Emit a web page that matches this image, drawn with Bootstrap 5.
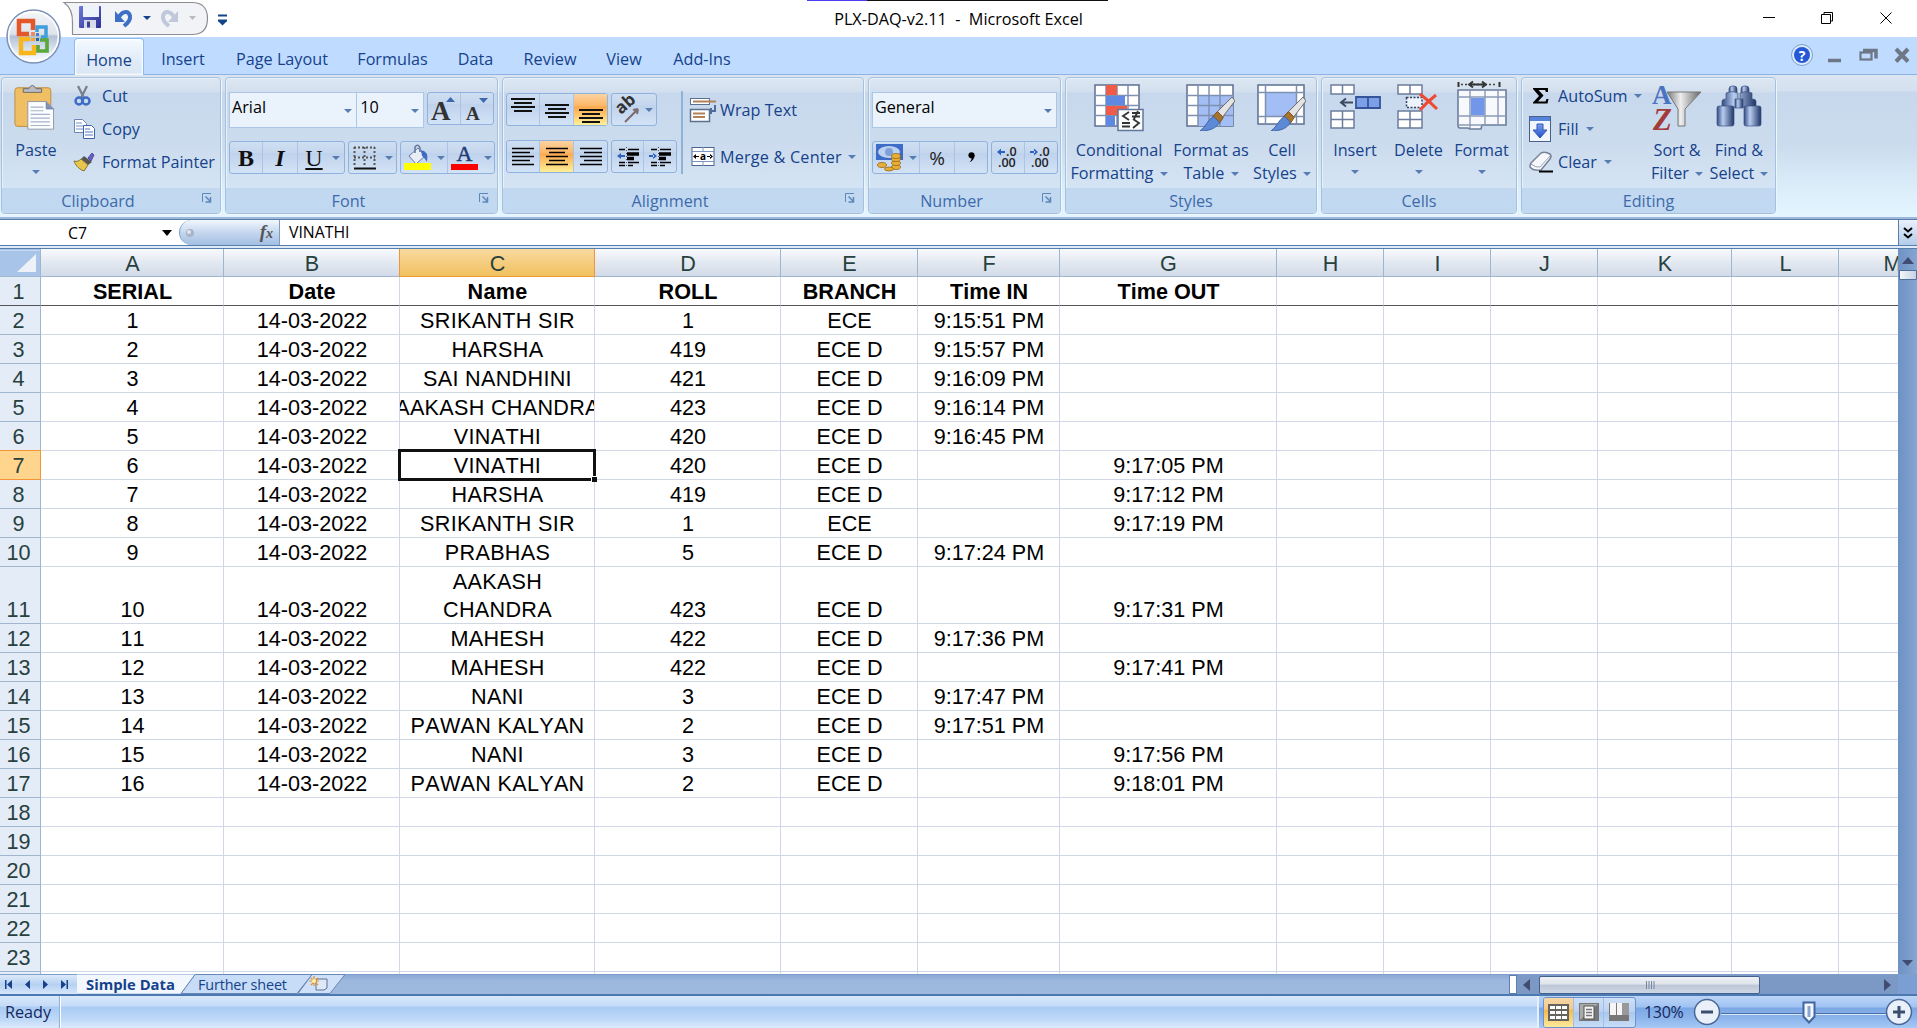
<!DOCTYPE html>
<html lang="en">
<head>
<meta charset="utf-8">
<title>PLX-DAQ-v2.11 - Microsoft Excel</title>
<link href="https://cdn.jsdelivr.net/npm/bootstrap@5.3.0/dist/css/bootstrap.min.css" rel="stylesheet">
<style>
html,body{height:100%;overflow:hidden}
body{font-family:"Open Sans","Noto Sans",sans-serif;font-size:16.2px;line-height:24px;color:#15428b;background:#fff;white-space:nowrap}
svg{display:block;flex:none;overflow:visible}
.app{width:1917px;height:1028px}
/* title bar */
.titlebar{height:37px;color:#000;font-size:16.2px;padding-top:7px}
.notch{width:301px;height:1px;background:linear-gradient(90deg,#4a3cf0 0 60px,#111 60px);left:807px;top:0}
.orb{left:5px;top:8px;z-index:5}
.qat{left:72px;top:1px}
.wbtns{right:0;top:0}
/* tab strip */
.tabstrip{height:38px;background:#bfdbff;border-bottom:1px solid #8db2e3;padding-left:74px;padding-top:1px}
.rtab{height:36px;padding-top:5px}
.rtab.on{height:37px;background:linear-gradient(#f5faff,#e1ebf8 60%,#dbe6f4);border:1px solid #8cbcf2;border-bottom:0;border-radius:4px 4px 0 0;box-shadow:inset 0 0 2px 1px #fff;margin-bottom:-1px}
.t1{width:70px}.t2{width:78px}.t3{width:120px}.t4{width:101px}.t5{width:65px}.t6{width:84px}.t7{width:64px}.t8{width:92px}
/* ribbon */
.ribbon{height:144px;padding:2px 0 2px 1px;background:linear-gradient(#dbe5f2,#d4e0ef 16px,#c7d8ed 17px,#cbdcee 50%,#dcedfa 80%,#e3f5ff 98%);border-bottom:2px solid #9fb8da}
.rgroup{height:137px;border:1px solid #a5c1de;border-radius:4px;box-shadow:1px 1px 0 #edf6fd,inset 1px 1px 0 #e8f1fa;background:linear-gradient(#dde7f3,#d3dfee 14px,#c7d8ed 15px,#ccdcee 50%,#dae9f7);margin-right:4px;overflow:hidden}
.rbody{height:110px}
.rlabel{height:25px;background:linear-gradient(#c2d8f0,#c0d9f1);color:#3e6aaa;padding-top:1px}
.g1{width:220px}.g2{width:273px}.g3{width:362px}.g4{width:193px}.g5{width:252px}.g6{width:196px}.g7{width:255px}
.launch{right:8px;top:5px}
.big{line-height:23px;text-align:center;padding-top:4px}
.dd{width:0;height:0;display:inline-block;border:4px solid transparent;border-top:4px solid #567db1;border-bottom:0;vertical-align:3px}
.combo{height:36px;background:#eaf3fc;border:1px solid #abc6e8;color:#000;padding:3px 0 0 2px;line-height:22px}
.combo .dd{margin:13px 4px 0 0}
.bgrp{height:33px;border:1px solid #8fb2de;border-radius:3px;background:linear-gradient(#cfdff2,#c5d7ee 35%,#bfd2ec 36%,#d3e3f6)}
.bgrp>*{height:100%;display:flex;align-items:center;justify-content:center;border-right:1px solid #a9c4e6}
.bgrp>*:last-child{border-right:0}
.hot{background:linear-gradient(#fbd3a2,#fdb665 38%,#fda94e 42%,#fff096)}
.serifc{font-family:"Liberation Serif",serif;color:#111}
.vsep{width:2px;height:83px;background:#8fb2d8;margin-top:13px}
.w32{width:32px}.w33{width:33px}.w34{width:34px}.w35{width:35px}.w46{width:46px}.w47{width:47px}
.srow{height:33px}
.slist{padding-top:1px}
/* formula bar */
.fbar{height:27px;background:#fff;border-top:1px solid #567fad;border-bottom:1px solid #567fad;color:#000;font-size:15.8px}
.fpill{width:101px;height:25px;border-radius:13px 0 0 13px;border:1px solid #7f9dc4;border-top:0;border-bottom:0;background:linear-gradient(#f2f7fd,#c5d7ef 50%,#a3bfe3)}
.fmore{width:19px;background:linear-gradient(#e9f1fb,#b3cbea);border-left:1px solid #567fad}
.fgap{height:2px;background:#dfebf9}
/* sheet */
.sheetarea{height:726px;border-top:1px solid #567fad}
.pane{width:1898px;height:725px;overflow:hidden}
.sheet{table-layout:fixed;width:1945px;border-collapse:separate;border-spacing:0;font-family:"Liberation Sans",Arial,sans-serif;font-size:21.6px;font-kerning:none;line-height:28px;color:#000}
.sheet th,.sheet td{padding:0;height:29px;text-align:center;vertical-align:bottom;border-right:1px solid #d0d7e5;border-bottom:1px solid #d0d7e5;font-weight:400;position:relative}
.sheet thead th{height:28px;line-height:27px;border-color:#9eb6ce;background:linear-gradient(#f8fafc,#e3e9f1 50%,#d2dbe8);color:#27413e}
.sheet .rh{background:#e4ecf7;border-color:#9eb6ce;color:#27413e;padding-right:4px}
.sheet thead .pickc{background:linear-gradient(#f8d99f,#f1c15f);border-color:#f29536;box-shadow:-1px 0 0 #f29536}
.sheet .pickr{background:#ffd58d;border-color:#f29536;box-shadow:0 -1px 0 #f29536}
.sheet thead .corner{background:#a9c4e9}
.sheet .frz td,.sheet .frz th{border-bottom-color:#555;font-weight:700}
.sheet .frz .rh{font-weight:400}
.sheet td:nth-child(4){letter-spacing:.3px}
.cellin{overflow:hidden;display:flex;justify-content:center}
.celltx{display:block;transform:translate(.5px,1px)}
.cursorbox{left:-2px;top:-2px;right:-2px;bottom:-2px;border:3px solid #111;z-index:2}
.cursorbox::after{content:"";position:absolute;right:-4px;bottom:-4px;width:6px;height:6px;background:#111;border-left:1px solid #fff;border-top:1px solid #fff}
.vbar{width:19px;background:linear-gradient(90deg,#6d92c4,#7c9dcb 60%,#86a6d4)}
.vthumb{width:18px;height:10px;background:linear-gradient(90deg,#f4f6f9,#c6d3e6);border:1px solid #506f9d;border-radius:1px;margin-top:1px}
/* sheet tabs */
.tabsbar{height:22px;background:linear-gradient(#8aa9d6,#9db8de 30%,#9fb9dd);border-top:1px solid #7e9fcb;border-bottom:2px solid #4c79b2}
.navb{width:77px;height:19px;background:linear-gradient(#dce9fa,#b7d1f2 50%,#d5e6fa)}
.stabs{font-size:14.4px;height:19px;line-height:19px}
.tabsvg{left:0;top:0}
.tname1{padding-left:9px;width:121px;font-size:14.8px}
.hthumb{width:221px;height:18px;border:1px solid #44618d;border-radius:2px;background:linear-gradient(#eef1f5,#dfe4eb 45%,#bcc6d6 50%,#cfd8e5)}
.hbar{width:381px;height:19px;background:#7b99c4}
.corner2{width:19px;background:#7b9fd3}
.split{width:8px;height:19px;background:#fff;border:1px solid #5c7eae}
/* status */
.status{height:32px;background:linear-gradient(#d9e8fb,#c5dbf7 30%,#a9cbf4 36%,#c0d9f8 75%,#dcebfd);color:#15295e}
.sleft{width:60px;border-right:1px solid #8eb0da;box-shadow:1px 0 0 #fff}
.sright{width:380px;border-left:2px solid #e7f1fd;background:linear-gradient(#bcd5f8,#a0c3f2 34%,#7ba7e4 38%,#8db5ec 70%,#a6caf6)}
.views{width:93px;height:31px;border:1px solid #6c93c8;border-radius:3px;overflow:hidden;background:linear-gradient(#cfe0f6,#b9d1f0 48%,#a9c7ee 50%,#c8ddf7)}
.views>*{width:30px;height:100%;border-right:1px solid #9fbfe8}
.views .von{background:linear-gradient(#f6d6a8,#f5c98c 38%,#f2b94c 42%,#fdea9b)}
.zoomval{margin-left:8px;width:49px;font-size:16px;letter-spacing:-.3px}
</style>
<script src="https://cdn.jsdelivr.net/npm/bootstrap@5.3.0/dist/js/bootstrap.bundle.min.js"></script>
</head>
<body>
<svg width="0" height="0" class="position-absolute">
 <defs>
  <linearGradient id="gOrb" x1="0" y1="0" x2="0" y2="1"><stop offset="0" stop-color="#f4f6f9"/><stop offset=".45" stop-color="#dfe4ec"/><stop offset=".5" stop-color="#b4c2d8"/><stop offset=".8" stop-color="#e3ebf5"/><stop offset="1" stop-color="#fff"/></linearGradient>
  <linearGradient id="gFunnel"><stop offset="0" stop-color="#777"/><stop offset=".4" stop-color="#eee"/><stop offset="1" stop-color="#666"/></linearGradient>
  <linearGradient id="gBin"><stop offset="0" stop-color="#304a80"/><stop offset=".35" stop-color="#b9cdf0"/><stop offset="1" stop-color="#1e3466"/></linearGradient>
  <linearGradient id="gBlue" x1="0" y1="0" x2="0" y2="1"><stop offset="0" stop-color="#7b9cf0"/><stop offset="1" stop-color="#2452c6"/></linearGradient>
  <linearGradient id="gSave" x1="0" y1="0" x2="1" y2="1"><stop offset="0" stop-color="#6f7ad6"/><stop offset="1" stop-color="#2b2f94"/></linearGradient>
  <symbol id="iLaunch" viewBox="0 0 10 11"><path d="M.5 9V.5H9" fill="none" stroke="#5d88b8"/><path d="M3.500 3.500l4.500 4.500M8.500 4v5h-5" fill="none" stroke="#5d88b8" stroke-width="1.500"/></symbol>
  <symbol id="iBrush" viewBox="0 0 36 36"><path d="M33 1l3 4L23 22l-6-5z" fill="#e4e4e4" stroke="#666"/><path d="M18 16l6 6-4 6-7-7z" fill="#a8732b" stroke="#7a5018"/><path d="M14 21l6 6c-3 6-10 9-20 9 6-4 8-12 14-15z" fill="#5d8ad6" stroke="#3c62a8"/></symbol>
 </defs>
</svg>

<div class="app d-flex flex-column position-relative">

 <svg class="orb position-absolute" width="57" height="57" viewBox="0 0 57 57">
  <circle cx="28.500" cy="28.500" r="26.500" fill="url(#gOrb)" stroke="#7d93b5" stroke-width="1.500"/><circle cx="28.500" cy="28.500" r="24.800" fill="none" stroke="#fff" stroke-width="1.500"/>
  <g fill="none">
   <path d="M24 26H14V13h14v9" stroke="#e4572b" stroke-width="4.500"/>
   <path d="M32 24v-5h9v10h-5" stroke="#3e9fdc" stroke-width="3.500"/>
   <path d="M25 31H16v14h13v-8" stroke="#f7b61c" stroke-width="4.500"/>
   <path d="M35 32h7v11h-9v-6" stroke="#5aa83c" stroke-width="3.700"/>
  </g>
  <path d="M26 24h4v4h-4z" fill="#f08a60"/><path d="M31 25h3v3h-3z" fill="#3e82cf"/><path d="M26 30h4v3h-4z" fill="#f5a623"/><path d="M31 30h3v3h-3z" fill="#2b62b0"/>
 </svg>

 <!-- title bar -->
 <header class="titlebar d-flex justify-content-center position-relative">
  <div class="notch position-absolute"></div>
  <svg class="qat position-absolute" width="170" height="36" viewBox="0 0 170 36">
   <path d="M-8 1.500H120Q135.500 1.500 135.500 17.500T120 33.500H.5V22Q1 8-8 1.500z" fill="#f1f3f7" stroke="#8d8d93" stroke-width="1.200"/>
   <rect x="7" y="5" width="22" height="22" rx="1" fill="url(#gSave)"/><rect x="11" y="5" width="16" height="11" fill="#eef2fb"/><rect x="12" y="19" width="12" height="8" fill="#d7dcea"/><rect x="15" y="20.500" width="3" height="6" fill="#3d4291"/>
   <path d="M47 16c4-7 10-6 11-1 .6 4-2 7-6 10" fill="none" stroke="#3c6fc6" stroke-width="4"/><path d="M43 10v11h10z" fill="#3c6fc6"/>
   <path d="M71 15h8l-4 4z" fill="#15428b"/>
   <path d="M102 16c-4-7-10-6-11-1-.6 4 2 7 6 10" fill="none" stroke="#bfc9db" stroke-width="4"/><path d="M106 10v11H96z" fill="#bfc9db"/>
   <path d="M117 15h7l-3.500 4z" fill="#b9b9be"/>
   <path d="M146 14.500h9M146 19.500h9" stroke="#15428b" stroke-width="2"/><path d="M146 20h9l-4.500 4.500z" fill="#15428b"/>
  </svg>
  <div>PLX-DAQ-v2.11 &nbsp;- &nbsp;Microsoft Excel</div>
  <svg class="wbtns position-absolute" width="167" height="37" viewBox="0 0 167 37" fill="none" stroke="#000">
   <path d="M13 17.500h12M71.500 14.500h9v9h-9zM74 14v-1.500h8.500v8.500H81M130.500 12.500l11 11m0-11l-11 11"/>
  </svg>
 </header>

 <!-- ribbon tabs -->
 <nav class="tabstrip d-flex position-relative">
  <div class="rtab on t1 d-flex align-items-center justify-content-center">Home</div>
  <div class="rtab t2 d-flex align-items-center justify-content-center">Insert</div>
  <div class="rtab t3 d-flex align-items-center justify-content-center">Page Layout</div>
  <div class="rtab t4 d-flex align-items-center justify-content-center">Formulas</div>
  <div class="rtab t5 d-flex align-items-center justify-content-center">Data</div>
  <div class="rtab t6 d-flex align-items-center justify-content-center">Review</div>
  <div class="rtab t7 d-flex align-items-center justify-content-center">View</div>
  <div class="rtab t8 d-flex align-items-center justify-content-center">Add-Ins</div>
  <svg class="ms-auto" width="130" height="36" viewBox="0 0 130 36">
   <circle cx="15" cy="17" r="10.500" fill="#dceafc" stroke="#7b9fd0"/><circle cx="15" cy="17" r="8" fill="#2458d6"/><text x="15" y="22.500" font-size="14" font-weight="700" fill="#fff" text-anchor="middle">?</text>
   <path d="M41 22.500h13" stroke="#6d7785" stroke-width="3.500"/>
   <path d="M76 12.500h13v8" fill="none" stroke="#6d7785" stroke-width="3.500"/><rect x="73.500" y="14.500" width="11" height="7" fill="#bfdbff" stroke="#6d7785" stroke-width="2.200"/>
   <path d="M109 11l12 12.500m0-12.500l-12 12.500" stroke="#6d7785" stroke-width="4"/>
  </svg>
 </nav>

 <!-- ribbon -->
 <section class="ribbon d-flex">
  <div class="rgroup g1">
   <div class="rbody d-flex">
    <div class="big" style="width:68px">
     <svg class="ms-2 ps-1" width="50" height="52" viewBox="0 0 50 52">
      <rect x="1" y="4" width="39" height="42" rx="3" fill="#f1bf63" stroke="#b98a3c"/><path d="M10 9V5h6q4-7 8 0h6v4z" fill="#b9bcc4" stroke="#666"/>
      <path d="M15 19h20l8 8v22H15z" fill="#fbfcff" stroke="#8b93a5"/><path d="M35 19v8h8" fill="#7d92b8" stroke="#6d7f9f"/><path d="M18 25h14M18 29h14M18 33h21M18 37h21M18 41h21M18 45h21" stroke="#a9b3c8" stroke-width="1.300"/>
     </svg>
     <div style="margin-top:5px">Paste</div><div class="dd" style="vertical-align:5px"></div>
    </div>
    <div class="slist">
     <div class="srow d-flex align-items-center"><svg width="32" height="20" viewBox="0 0 32 20"><path d="M8 0l6 12M17 0l-6 12" stroke="#777e8c" stroke-width="2.200"/><circle cx="9" cy="15" r="3.500" fill="none" stroke="#3c6cc4" stroke-width="2.500"/><circle cx="16" cy="15" r="3.500" fill="none" stroke="#3c6cc4" stroke-width="2.500"/></svg>Cut</div>
     <div class="srow d-flex align-items-center"><svg width="32" height="20" viewBox="0 0 32 20"><path d="M4.500.5h8l4 4v9h-12z" fill="#fff" stroke="#6c86b4"/><path d="M6 4h6M6 7h8M6 10h8" stroke="#6f8fd0"/><path d="M13.500 6.500h8l3 3v10h-11z" fill="#fff" stroke="#3f64a8"/><path d="M15 10h5M15 13h8M15 16h8" stroke="#4f78c8"/></svg>Copy</div>
     <div class="srow d-flex align-items-center"><svg width="32" height="20" viewBox="0 0 32 20"><path d="M18 6l4-5 2 2-3 6z" fill="#6b5fc0" stroke="#5349a0"/><path d="M14 4l8 6-4 3-7-6z" fill="#555"/><path d="M11 7l7 6-4 6C8 17 5 12 4 9c3 1 5 0 7-2z" fill="#e6c64d" stroke="#8a7430"/></svg>Format Painter</div>
    </div>
   </div>
   <div class="rlabel text-center position-relative" style="padding-right:26px"><svg class="launch position-absolute" width="10" height="11"><use href="#iLaunch"/></svg>Clipboard</div>
  </div>

  <div class="rgroup g2">
   <div class="rbody" style="padding:14px 3px 0 3px">
    <div class="d-flex">
     <div class="combo d-flex justify-content-between" style="width:129px">Arial<span class="dd"></span></div>
     <div class="combo d-flex justify-content-between border-start-0" style="width:67px;padding-left:3px">10<span class="dd"></span></div>
     <div class="bgrp d-flex" style="margin-left:3px"><div class="w33"><svg width="26" height="26" viewBox="0 0 26 26"><text x="0" y="24" font-size="27" font-weight="700" class="serifc" fill="#333">A</text><path d="M15 6l4.500-5 4.500 5z" fill="#3d68ad"/></svg></div><div class="w32"><svg width="26" height="26" viewBox="0 0 26 26"><text x="2" y="24" font-size="19" font-weight="700" class="serifc" fill="#333">A</text><path d="M15 2h9l-4.500 5z" fill="#3d68ad"/></svg></div></div>
    </div>
    <div class="d-flex" style="margin-top:13px">
     <div class="bgrp d-flex"><div class="w33 serifc fw-bold fs-4">B</div><div class="w35 serifc fst-italic fw-bold fs-4">I</div><div class="w46"><span class="serifc fs-4 text-decoration-underline" style="margin-right:9px;margin-left:3px">U</span><span class="dd"></span></div></div>
     <div class="bgrp d-flex" style="margin-left:3px"><div class="w47"><svg class="me-2" width="24" height="24" viewBox="0 0 24 24"><path d="M1 1.500h21M1 11.500h21M1.500 1v19M11.500 1v19M21.500 1v19" stroke="#555" stroke-width="2" stroke-dasharray="2 2"/><path d="M1 22.500h22" stroke="#111" stroke-width="2.200"/></svg><span class="dd"></span></div></div>
     <div class="bgrp d-flex" style="margin-left:3px"><div class="w47"><svg style="margin-right:6px" width="27" height="27" viewBox="0 0 27 27"><path d="M5 12l9-8 7 8-9 8z" fill="#e9eef6" stroke="#667a9c"/><path d="M11 9V3q3-4 5 1v4" fill="none" stroke="#667a9c" stroke-width="1.600"/><path d="M17 6q8 1 6 12-3-5-5-6z" fill="#3c6cc4"/><path d="M0 19h27v7H0z" fill="#ff0"/></svg><span class="dd"></span></div><div class="w46"><svg style="margin-right:6px" width="27" height="27" viewBox="0 0 27 27"><text x="13.500" y="17" font-size="22" text-anchor="middle" class="serifc" style="fill:#1f3c77;font-weight:500;stroke:#1f3c77;stroke-width:.5">A</text><path d="M0 20h27v6H0z" fill="red"/></svg><span class="dd"></span></div></div>
    </div>
   </div>
   <div class="rlabel text-center position-relative" style="padding-right:26px"><svg class="launch position-absolute" width="10" height="11"><use href="#iLaunch"/></svg>Font</div>
  </div>

  <div class="rgroup g3">
   <div class="rbody d-flex">
    <div style="padding:15px 0 0 3px">
     <div class="d-flex">
      <div class="bgrp d-flex"><div class="w33"><svg width="24" height="24" viewBox="0 0 24 24"><path d="M0 1h24M3 5h18M0 9h24M3 13h18" stroke="#111" stroke-width="2"/></svg></div><div class="w34"><svg width="24" height="24" viewBox="0 0 24 24"><path d="M0 7h24M3 11h18M0 15h24M3 19h18" stroke="#111" stroke-width="2"/></svg></div><div class="w33 hot"><svg width="24" height="24" viewBox="0 0 24 24"><path d="M0 12h24M3 16h18M0 20h24M3 24h18" stroke="#111" stroke-width="2"/></svg></div></div>
      <div class="bgrp d-flex" style="margin-left:3px"><div style="width:44px"><svg class="me-1" width="26" height="26" viewBox="0 0 26 26"><text transform="translate(6 18) rotate(-42)" font-size="17" font-weight="700" fill="#333">ab</text><path d="M10 25l13-13m0 0l-5 1m5-1l-1 5" stroke="#7b6a70" stroke-width="2" fill="none"/></svg><span class="dd"></span></div></div>
     </div>
     <div class="d-flex" style="margin-top:14px">
      <div class="bgrp d-flex"><div class="w33"><svg width="22" height="19" viewBox="0 0 22 19"><path d="M0 1.500h22M0 5.500h18M0 9.500h22M0 13.500h18M0 17.500h22" stroke="#000" stroke-width="1.400"/></svg></div><div class="w34 hot"><svg width="22" height="19" viewBox="0 0 22 19"><path d="M0 1.500h22M3 5.500h16M0 9.500h22M3 13.500h16M0 17.500h22" stroke="#000" stroke-width="1.400"/></svg></div><div class="w33"><svg width="22" height="19" viewBox="0 0 22 19"><path d="M0 1.500h22M4 5.500h18M0 9.500h22M4 13.500h18M0 17.500h22" stroke="#000" stroke-width="1.400"/></svg></div></div>
      <div class="bgrp d-flex" style="margin-left:3px"><div class="w32"><svg width="22" height="20" viewBox="0 0 22 20"><path d="M2 2.500h6M11 2.500h11M2 15.500h6M11 15.500h11M2 18.500h6M11 18.500h5" stroke="#000" stroke-width="1.300"/><path d="M10 7h12M10 11.500h7" stroke="#000" stroke-width="3.500"/><path d="M9.500 0v20" stroke="#555" stroke-dasharray="1 2"/><path d="M0 9l4-3v6zM3 8h5v2H3z" fill="#2f62c0"/></svg></div><div class="w32"><svg width="22" height="20" viewBox="0 0 22 20"><path d="M2 2.500h6M11 2.500h11M2 15.500h6M11 15.500h11M2 18.500h6M11 18.500h5" stroke="#000" stroke-width="1.300"/><path d="M10 7h12M10 11.500h7" stroke="#000" stroke-width="3.500"/><path d="M9.500 0v20" stroke="#555" stroke-dasharray="1 2"/><path d="M8 9L4 6v6zM0 8h5v2H0z" fill="#2f62c0"/></svg></div></div>
     </div>
    </div>
    <div class="vsep ms-1"></div>
    <div style="padding:15px 0 0 7px">
     <div class="srow d-flex align-items-center"><svg style="margin-right:3px" width="27" height="26" viewBox="0 0 27 26"><rect x=".5" y="1.500" width="19" height="6" fill="#fff" stroke="#5d6f8e"/><path d="M3 4.500h23" stroke="#b2835b" stroke-width="2"/><rect x=".5" y="12.500" width="19" height="12" fill="#fff" stroke="#5d6f8e" stroke-width="1.500"/><path d="M3 16.500h12M3 20h12" stroke="#b2835b" stroke-width="2"/><path d="M25 8v6h-4m0-3v6" stroke="#4d6c9c" stroke-width="2" fill="none"/></svg>Wrap Text</div>
     <div class="srow d-flex align-items-center" style="margin-top:14px"><svg style="margin:0 6px 0 2px" width="22" height="19" viewBox="0 0 22 19"><rect x="0" y=".5" width="22" height="18" fill="#fff" stroke="#4d668f"/><path d="M0 4.500h22M0 14.500h22M11 0v4M11 15v4" stroke="#7c95bd"/><text x="11" y="13" font-size="10" font-weight="700" text-anchor="middle">a</text><path d="M1 9.500l3-2.500v5zM21 9.500L18 7v5zM3 9h4v1H3zM15 9h4v1h-4z"/></svg><span style="letter-spacing:.2px">Merge &amp; Center</span><span class="dd" style="margin-left:6px"></span></div>
    </div>
   </div>
   <div class="rlabel text-center position-relative" style="padding-right:26px"><svg class="launch position-absolute" width="10" height="11"><use href="#iLaunch"/></svg>Alignment</div>
  </div>

  <div class="rgroup g4">
   <div class="rbody" style="padding:14px 3px 0 3px">
    <div class="combo d-flex justify-content-between">General<span class="dd"></span></div>
    <div class="d-flex" style="margin-top:13px">
     <div class="bgrp d-flex"><div class="w47"><svg style="margin-right:6px" width="27" height="27" viewBox="0 0 27 27"><rect y="0" width="27" height="16" fill="#3d6bc8"/><ellipse cx="13" cy="8" rx="11" ry="6" fill="#bcd0f0"/><circle cx="13" cy="8" r="4" fill="#7f9fd8"/><g fill="#e8ae36" stroke="#8a5f14" stroke-width=".7"><ellipse cx="6" cy="21" rx="4.500" ry="2.500"/><ellipse cx="20" cy="23" rx="4.500" ry="2.500"/><ellipse cx="20" cy="19" rx="4.500" ry="2.500"/><ellipse cx="20" cy="15" rx="4.500" ry="2.500"/><ellipse cx="20" cy="12" rx="4.500" ry="2.500"/><ellipse cx="13" cy="25" rx="4.500" ry="2"/></g></svg><span class="dd"></span></div><div class="w35" style="color:#222;font-size:19px">%</div><div class="w32"><svg width="7" height="11" viewBox="0 0 8 12"><circle cx="4" cy="3.500" r="3.500"/><path d="M7.500 3q0 6-6 8.500Q5 8 4 5z"/></svg></div></div>
     <div class="bgrp d-flex" style="margin-left:3px"><div class="w33"><svg width="22" height="21" viewBox="0 0 22 21" font-size="12.500" font-weight="600" fill="#222"><text x="9" y="8.500">.0</text><text x="1" y="20">.00</text><path d="M0 5l4-3.500v7zM3 4h5v2H3z" fill="#2f62c0"/></svg></div><div class="w32"><svg width="22" height="21" viewBox="0 0 22 21" font-size="12.500" font-weight="600" fill="#222"><text x="9" y="8.500">.0</text><text x="1" y="20">.00</text><path d="M8 5L4 1.500v7zM0 4h5v2H0z" fill="#2f62c0"/></svg></div></div>
    </div>
   </div>
   <div class="rlabel text-center position-relative" style="padding-right:26px"><svg class="launch position-absolute" width="10" height="11"><use href="#iLaunch"/></svg>Number</div>
  </div>

  <div class="rgroup g5">
   <div class="rbody d-flex">
    <div class="big d-flex flex-column align-items-center" style="width:106px">
     <svg width="50" height="50" viewBox="0 0 50 50"><rect x="1" y="3" width="44" height="41" fill="#fff" stroke="#5c6f90" stroke-width="1.500"/><path d="M1 13.500h44M1 23.500h44M1 33.500h44M12 3v41M23 3v41M34 3v41" stroke="#7f91b0" stroke-width="1.500"/><path d="M12 3h11v10H12zM12 24h21v9H12z" fill="#f05a48"/><path d="M12 14h19v9H12zM12 34h9v10h-9z" fill="#5f89e0"/><rect x="24" y="27.500" width="25" height="21" fill="#fbfcfe" stroke="#62779b" stroke-width="1.500"/><path d="M35 30l-6 4 6 4M28 41h8M28 44.500h8M39 37l6 4-6 5M38 31h8M38 34.500h8M44 29l-4 8" fill="none" stroke="#333" stroke-width="1.800"/></svg>
     <div style="margin-top:7px">Conditional</div><div>Formatting <span class="dd" style="margin-left:2px"></span></div>
    </div>
    <div class="big d-flex flex-column align-items-center" style="width:78px">
     <svg width="50" height="50" viewBox="0 0 50 50"><rect x="1" y="3" width="46" height="41" fill="#fff" stroke="#5c6f90" stroke-width="1.500"/><path d="M12 14h35v30H12z" fill="#a3bdf5"/><path d="M1 13.500h46M1 23.500h46M1 33.500h46M12 3v41M23 3v41M34 3v41" stroke="#7f91b0" stroke-width="1.500"/><use href="#iBrush" x="14" y="14" width="35" height="35"/></svg>
     <div style="margin-top:7px">Format as</div><div>Table <span class="dd" style="margin-left:2px"></span></div>
    </div>
    <div class="big d-flex flex-column align-items-center" style="width:64px">
     <svg width="50" height="50" viewBox="0 0 50 50"><rect x="1" y="3" width="46" height="39" fill="#fff" stroke="#5c6f90" stroke-width="1.500"/><path d="M9 11h30v23H9z" fill="#a3bdf5"/><path d="M1 10.500h46M1 34.500h46M8.500 3v39M39.500 3v39" stroke="#7f91b0" stroke-width="1.500"/><use href="#iBrush" x="14" y="14" width="35" height="35"/></svg>
     <div style="margin-top:7px">Cell</div><div>Styles <span class="dd" style="margin-left:2px"></span></div>
    </div>
   </div>
   <div class="rlabel text-center">Styles</div>
  </div>

  <div class="rgroup g6">
   <div class="rbody d-flex">
    <div class="big d-flex flex-column align-items-center" style="width:66px">
     <svg width="50" height="50" viewBox="0 0 50 50"><g fill="#fff" stroke="#6b7d9b" stroke-width="1.500"><path d="M1 3h23v9H1zM12.500 3v9M1 29h23v17H1zM12.500 29v17M1 37.500h23"/></g><path d="M26 15h24v11H26zM38 15v11" fill="#7d9fe8" stroke="#35549a" stroke-width="1.800"/><path d="M23 20.500H11m5-4l-5 4 5 4" fill="none" stroke="#3e4a5f" stroke-width="2"/></svg>
     <div style="margin-top:7px">Insert</div><span class="dd mt-2"></span>
    </div>
    <div class="big d-flex flex-column align-items-center" style="width:61px">
     <svg width="44" height="50" viewBox="0 0 44 50"><g fill="#fff" stroke="#6b7d9b" stroke-width="1.500"><path d="M1 3h24v9H1zM13 3v9M1 29h24v17H1zM13 29v17M1 37.500h24"/></g><path d="M9.500 15.500H25v10H9.500z" fill="#eef3fb" stroke="#36435c" stroke-dasharray="2 1.500" stroke-width="1.500"/><path d="M23 12q8 6 17 15M39 13Q30 20 23 28" fill="none" stroke="#ee4a32" stroke-width="3"/></svg>
     <div style="margin-top:7px">Delete</div><span class="dd mt-2"></span>
    </div>
    <div class="big d-flex flex-column align-items-center" style="width:65px">
     <svg width="50" height="50" viewBox="0 0 50 50"><path d="M1.500 0v5M42.500 0v5" stroke="#333" stroke-width="2"/><path d="M4 2.500h36" stroke="#444" stroke-width="1.500" stroke-dasharray="2 2"/><path d="M12 2.500h17m-13-3l-4 3 4 3m9-6l4 3-4 3" fill="none" stroke="#333" stroke-width="1.800"/><path d="M1 8h48v35H25l-1 4H13l-2-1H3q-2 0-2-3z" fill="#f7f9fd" stroke="#6b7d9b" stroke-width="1.600"/><path d="M1 15h48M1 34h48M13 8v38M28 8v35M41 8v35M1 43h25" stroke="#8a9ab6" stroke-width="1.400"/><path d="M14 16h13.500v17H14z" fill="#7297ea"/></svg>
     <div style="margin-top:7px">Format</div><span class="dd mt-2"></span>
    </div>
   </div>
   <div class="rlabel text-center">Cells</div>
  </div>

  <div class="rgroup g7">
   <div class="rbody d-flex">
    <div class="slist" style="width:122px;padding-left:7px">
     <div class="srow d-flex align-items-center"><svg width="29" height="20" viewBox="0 0 29 20"><path d="M4 3V2h15v4h-2l-1-2H9.500l5 5.500-5.500 6h7.500l1-2.500h2l-1 4.500H4v-1L10 10z"/></svg>AutoSum<span class="dd" style="margin-left:7px"></span></div>
     <div class="srow d-flex align-items-center"><svg width="29" height="26" viewBox="0 0 29 26"><rect x=".5" y=".5" width="21" height="25" fill="#f2f6fd" stroke="#4a6088"/><path d="M1 1h20v4H1z" fill="#5583de"/><path d="M8 8h6v6h4l-7 8-7-8h4z" fill="url(#gBlue)" stroke="#2e58b8"/></svg>Fill<span class="dd" style="margin-left:7px"></span></div>
     <div class="srow d-flex align-items-center"><svg width="29" height="22" viewBox="0 0 29 22"><path d="M2 12L12 2q4-2 9 1 2 2 0 5L12 19q-8 1-11-3 0-3 1-4z" fill="#f6f8fb" stroke="#77839a" stroke-width="1.500"/><path d="M2 13q5 4 9 3L21 5" fill="none" stroke="#9aa5b8"/><path d="M10 20.500h14" stroke="#000" stroke-width="2"/></svg>Clear<span class="dd" style="margin-left:7px"></span></div>
    </div>
    <div class="big d-flex flex-column align-items-center" style="width:66px">
     <svg width="50" height="50" viewBox="0 0 50 50"><text x="0" y="22" font-size="27" font-weight="700" class="serifc" style="fill:#4a74c0">A</text><text x="1" y="48" font-size="31" font-weight="700" font-style="italic" class="serifc" style="fill:#a33b3b">Z</text><path d="M15 10h34L33 27v17h-7V27z" fill="url(#gFunnel)" stroke="#777"/></svg>
     <div style="margin-top:7px">Sort &amp;</div><div>Filter <span class="dd" style="margin-left:2px"></span></div>
    </div>
    <div class="big d-flex flex-column align-items-center" style="width:58px">
     <svg width="46" height="50" viewBox="0 0 46 50"><g fill="url(#gBin)" stroke="#3c5382" stroke-width=".7"><rect x="13" y="4" width="8" height="9" rx="3"/><rect x="25" y="4" width="8" height="9" rx="3"/><path d="M10 11q6-3 12 0v14H6v-6q0-2 4-2zM36 11q-6-3-12 0v14h16v-6q0-2-4-2z"/><rect x="1" y="24" width="17" height="20" rx="2"/><rect x="28" y="24" width="17" height="20" rx="2"/><rect x="19" y="17" width="8" height="9"/></g></svg>
     <div style="margin-top:7px">Find &amp;</div><div>Select <span class="dd" style="margin-left:2px"></span></div>
    </div>
   </div>
   <div class="rlabel text-center">Editing</div>
  </div>
 </section>

 <!-- formula bar -->
 <section class="fbar d-flex">
  <div class="d-flex align-items-center" style="width:179px;padding-left:68px">C7<svg class="ms-auto" style="margin-right:7px" width="10" height="6"><path d="M0 0h10L5 6z"/></svg></div>
  <div class="fpill d-flex align-items-center justify-content-between"><svg style="margin-left:6px" width="8" height="8"><circle cx="4" cy="4" r="4" fill="#aab4c6"/><circle cx="3" cy="3" r="2" fill="#e0e5ee"/></svg><span class="serifc fst-italic fw-bold" style="font-size:19px;color:#555;padding-right:6px">f<small style="font-size:14px">x</small></span></div>
  <div style="padding-left:9px">VINATHI</div>
  <div class="fmore ms-auto d-flex align-items-center justify-content-center"><svg width="8" height="12" viewBox="0 0 8 12" fill="none" stroke="#000" stroke-width="2"><path d="M0 1l4 3.500L8 1M0 7l4 3.500L8 7"/></svg></div>
 </section>
 <div class="fgap"></div>

 <!-- worksheet -->
 <main class="sheetarea d-flex">
  <div class="pane">
   <table class="sheet"><colgroup id="cols"></colgroup><thead><tr id="heads"></tr></thead><tbody id="rows"></tbody></table>
  </div>
  <div class="vbar d-flex flex-column align-items-center">
   <svg width="12" height="20"><path d="M0 15h12L6 8z" fill="#414c72"/></svg>
   <div class="vthumb"></div>
   <svg class="mt-auto" style="margin-bottom:6px" width="12" height="8"><path d="M0 0h11L5.500 6z" fill="#414c72"/></svg>
  </div>
 </main>

 <!-- sheet tabs -->
 <section class="tabsbar d-flex">
  <div class="navb"><svg width="77" height="19" viewBox="0 0 77 19" fill="#15428b"><path d="M5 5h1.500v9H5zM12 5v9L7 9.500zM30 5v9l-5-4.500zM43 5v9l5-4.500zM61 5v9l5-4.500zM66.500 5H68v9h-1.500z"/></svg></div>
  <div class="stabs position-relative d-flex">
   <svg class="tabsvg position-absolute" width="275" height="19" viewBox="0 0 275 19"><path d="M221 18.500L235-.5h33l-15 19z" fill="#cfe1f8" stroke="#6887b4"/><path d="M104 18.500L118-.5h117l-15 19z" fill="#c6dcf7" stroke="#6887b4"/><path d="M0 18.500V-.5h118l-14 19z" fill="#f2f7fd"/><path d="M118-.5l-14 19" stroke="#6887b4"/>
    <path d="M239 4h11v9l-3 2h-8z" fill="#dfe8f7" stroke="#5d6f95"/><path d="M237 1v10M232 6h10M234 3l7 7M241 3l-7 7" stroke="#e3902c" stroke-width="1.200"/><circle cx="237" cy="6" r="2" fill="#fff3b0"/></svg>
   <div class="tname1 position-relative fw-bold">Simple Data</div>
   <div class="position-relative" style="width:156px;letter-spacing:-.15px">Further sheet</div>
  </div>
  <div class="split ms-auto"></div>
  <div class="hbar d-flex align-items-center">
   <svg width="22" height="14"><path d="M13 1v12L6 7z" fill="#414c72"/></svg>
   <div class="hthumb d-flex align-items-center justify-content-center"><svg width="8" height="8"><path d="M.5 0v8M3 0v8M5.500 0v8M8 0v8" stroke="#75849f"/></svg></div>
   <svg class="ms-auto" width="14" height="14"><path d="M0 1v12l7-6z" fill="#414c72"/></svg>
  </div>
  <div class="corner2"></div>
 </section>

 <!-- status bar -->
 <footer class="status d-flex">
  <div class="sleft pt-1" style="padding-left:5px">Ready</div>
  <div class="sright ms-auto d-flex align-items-center ps-1">
   <div class="views d-flex">
    <div class="von d-flex align-items-center justify-content-center"><svg width="21" height="17" viewBox="0 0 21 17"><rect width="21" height="17" fill="#66635c"/><g fill="#fff"><path d="M2 2h5v3H2zM8 2h5v3H8zM14 2h5v3h-5zM2 7h5v3H2zM8 7h5v3H8zM14 7h5v3h-5zM2 12h5v3H2zM8 12h5v3H8zM14 12h5v3h-5z"/></g></svg></div>
    <div class="d-flex align-items-center justify-content-center"><svg width="20" height="18" viewBox="0 0 20 18"><rect width="20" height="18" fill="#777"/><path d="M1 1h18L1 17z" fill="#aaa"/><rect x="5" y="3" width="10" height="13" fill="#f5f5f5" stroke="#555"/><path d="M7 6.500h6M7 9.500h6M7 12.500h6" stroke="#777" stroke-width="1.500"/></svg></div>
    <div class="d-flex align-items-center justify-content-center border-0"><svg width="20" height="18" viewBox="0 0 20 18"><rect width="20" height="18" fill="#777"/><path d="M1 0h6v12H1zM8 0h5v12H8z" fill="#f5f5f5"/><path d="M13 0h7v12h-7z" fill="#999"/></svg></div>
   </div>
   <span class="zoomval">130%</span>
   <svg width="224" height="30" viewBox="0 0 224 30"><path d="M28 16.500h165" stroke="#4a6ea6"/><path d="M28 17.500h165" stroke="#d7e6fa"/><g stroke="#4c6794" stroke-width="1.500" fill="#e9f0fa"><circle cx="14" cy="15" r="12.500"/><circle cx="206" cy="15" r="12.500"/></g><path d="M8 15h12M200 15h12M206 9v12" stroke="#3c4d6e" stroke-width="3"/><path d="M110.500 5.500h11v14l-5.500 6-5.500-6z" fill="#f4f8fd" stroke="#3f669f" stroke-width="2"/><path d="M116 9v11" stroke="#8aa6cf" stroke-width="3"/></svg>
  </div>
 </footer>
</div>

<script>
const widths=[41,183,176,195,186,137,142,217,107,107,107,134,107,107];
document.getElementById('cols').innerHTML=widths.map(w=>`<col style="width:${w}px">`).join('');
document.getElementById('heads').innerHTML='<th class="corner"><svg width="40" height="27"><path d="M36 5v18H17z" fill="#eef2f8"/><path d="M0 1.500h40" stroke="#c6d9f2"/></svg></th>'+
 [...'ABCDEFGHIJKLM'].map(c=>`<th class="${c==='C'?'pickc':''}"><span class="celltx">${c}</span></th>`).join('');
const D='14-03-2022';
const data=[
 ['SERIAL','Date','Name','ROLL','BRANCH','Time IN','Time OUT'],
 [1,D,'SRIKANTH SIR',1,'ECE','9:15:51 PM',''],
 [2,D,'HARSHA',419,'ECE D','9:15:57 PM',''],
 [3,D,'SAI NANDHINI',421,'ECE D','9:16:09 PM',''],
 [4,D,'AAKASH CHANDRA',423,'ECE D','9:16:14 PM',''],
 [5,D,'VINATHI',420,'ECE D','9:16:45 PM',''],
 [6,D,'VINATHI',420,'ECE D','','9:17:05 PM'],
 [7,D,'HARSHA',419,'ECE D','','9:17:12 PM'],
 [8,D,'SRIKANTH SIR',1,'ECE','','9:17:19 PM'],
 [9,D,'PRABHAS',5,'ECE D','9:17:24 PM',''],
 [10,D,'AAKASH<br>CHANDRA',423,'ECE D','','9:17:31 PM'],
 [11,D,'MAHESH',422,'ECE D','9:17:36 PM',''],
 [12,D,'MAHESH',422,'ECE D','','9:17:41 PM'],
 [13,D,'NANI',3,'ECE D','9:17:47 PM',''],
 [14,D,'PAWAN KALYAN',2,'ECE D','9:17:51 PM',''],
 [15,D,'NANI',3,'ECE D','','9:17:56 PM'],
 [16,D,'PAWAN KALYAN',2,'ECE D','','9:18:01 PM']];
let out='';
for(let r=1;r<=24;r++){
 const v=data[r-1]||[];
 out+=`<tr class="${r===1?'frz':''}"><th class="rh ${r===7?'pickr':''}"><span class="celltx">${r<24?r:''}</span></th>`;
 for(let c=0;c<13;c++) out+=`<td><div class="cellin"><span class="celltx">${v[c]??''}</span></div>${r===7&&c===2?'<div class="cursorbox position-absolute"></div>':''}</td>`;
 out+='</tr>';
}
document.getElementById('rows').innerHTML=out;
</script>
</body>
</html>
